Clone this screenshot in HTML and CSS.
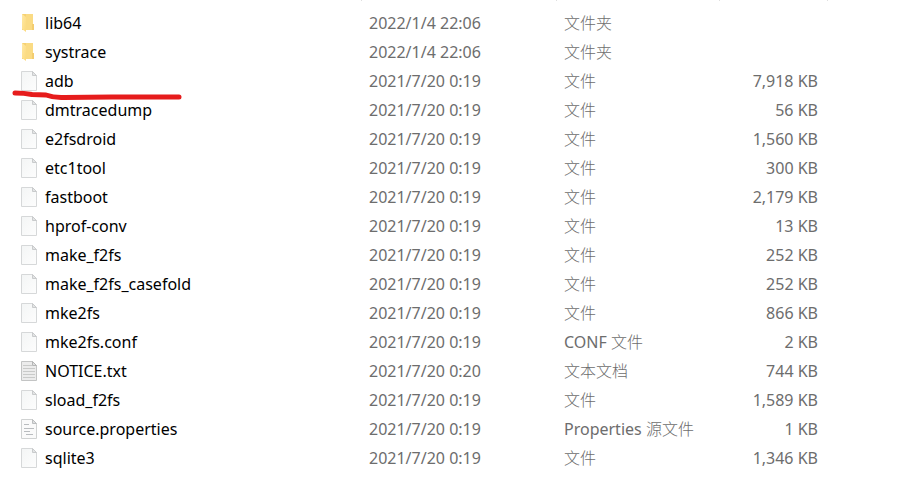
FILE: index.html
```html
<!DOCTYPE html>
<html lang="zh-CN">
    <head>
        <meta charset="utf-8">
        <title>platform-tools</title>
        <link rel="stylesheet" href="styles.css">
    </head>
    <body>
        <svg class="defs" width="0" height="0" aria-hidden="true">
            <linearGradient id="g-front" x1="0" y1="0" x2="1" y2="1">
                <stop offset="0" stop-color="#ffe9a6"/>
                <stop offset="1" stop-color="#fbd97b"/>
            </linearGradient>
            <linearGradient id="g-page" x1="0" y1="0" x2="1" y2="1">
                <stop offset="0" stop-color="#f3f5f5"/>
                <stop offset="1" stop-color="#fdfdfd"/>
            </linearGradient>
            <symbol id="i-folder" viewBox="0 0 16 20">
                <path d="M1 1h11v10h1v6H1z" fill="#f6d173"/>
                <path d="M5 1h7v10h1v6H5z" fill="#fadb84"/>
                <path d="M11 11h2v6h-2z" fill="#f3cd70"/>
                <path d="M1 1l4 3v15l-4-3z" fill="url(#g-front)"/>
            </symbol>
            <symbol id="i-file" viewBox="0 0 16 20">
                <path d="M.5.5h11l4 4v15H.5z" fill="url(#g-page)" stroke="#d6d8d9"/>
                <path d="M11.5.5v4h4z" fill="#e3e4e5" stroke="#c9cbcc"/>
            </symbol>
            <symbol id="i-text" viewBox="0 0 16 20">
                <path d="M.5.5h11l4 4v15H.5z" fill="#ececec" stroke="#c3c4c4"/>
                <path d="M2 4.500h9M2 7.500h12M2 10.500h12M2 13.500h12M2 16.500h12" stroke="#c9cac9"/>
                <path d="M11.5.5v4h4z" fill="#e0e0e0" stroke="#b5b6b6"/>
            </symbol>
            <symbol id="i-props" viewBox="0 0 16 20">
                <path d="M.5.5h11l4 4v15H.5z" fill="#fafafa" stroke="#d0d2d2"/>
                <path d="M3 5.5h5M3 9.5h10M3 12.5h6M5 15.5h7" stroke="#b9bcbf"/>
                <path d="M11.5.5v4h4z" fill="#dedfe0" stroke="#bcbebf"/>
            </symbol>
        </svg>
        <table class="files">
            <colgroup>
                <col class="c-name"><col class="c-date"><col class="c-type"><col class="c-size"><col>
            </colgroup>
            <thead>
                <tr><th></th><th></th><th></th><th></th><th></th></tr>
            </thead>
            <tbody id="rows"></tbody>
        </table>
        <script src="script.js"></script>
    </body>
</html>
```
FILE: styles.css
```css
:root {
    --c-text: #000000;
    --c-sub: #6d6d6d;
    --c-line: #e0e0e0;
    --c-mark: #e61c1c;
    --row-h: 29px;
}
html, body {
    margin: 0;
    padding: 0;
}

body {
    background-color: #ffffff;
    color: var(--c-text);
    font-family: "Noto Sans", "Noto Sans CJK SC", sans-serif;
    font-size: 16px;
    line-height: 28px;
}

.defs {
    position: absolute;
}

.files {
    width: 100%;
    table-layout: fixed;
    border-collapse: separate;
    border-spacing: 0;
}
.files .c-name {
    width: 362px;
}
.files .c-date {
    width: 195px;
}
.files .c-type {
    width: 163px;
}
.files .c-size {
    width: 108px;
}

/* bottom edge of the header, only the column dividers are left */
.files th {
    height: 1px;
    padding: 0;
    line-height: 0;
    border-right: 1px solid var(--c-line);
}
.files th:last-child {
    border-right: 0;
}

.files tbody::before {
    content: "";
    display: table-row;
    height: 7px;
}
.files td {
    height: var(--row-h);
    padding: 0 7px;
    color: var(--c-sub);
    white-space: nowrap;
}
.files .name {
    position: relative;
    padding-left: 21px;
    color: var(--c-text);
}
.files .size {
    padding-right: 10px;
    text-align: right;
}

.entry {
    display: flex;
    align-items: center;
    gap: 8px;
}
.entry .icon {
    width: 16px;
    height: 20px;
}

.cjk {
    font-family: "Noto Sans CJK SC", sans-serif;
    font-weight: 300;
}

.mark {
    position: absolute;
    left: 12px;
    top: 23px;
    z-index: 1;
    fill: none;
    stroke: var(--c-mark);
    stroke-width: 5;
    stroke-linecap: round;
    stroke-linejoin: round;
}
```
FILE: script.js
```js
(function(){
    var files = [
        ["folder", "lib64", "2022/1/4 22:06", "", "文件夹", ""],
        ["folder", "systrace", "2022/1/4 22:06", "", "文件夹", ""],
        ["file", "adb", "2021/7/20 0:19", "", "文件", "7,918 KB"],
        ["file", "dmtracedump", "2021/7/20 0:19", "", "文件", "56 KB"],
        ["file", "e2fsdroid", "2021/7/20 0:19", "", "文件", "1,560 KB"],
        ["file", "etc1tool", "2021/7/20 0:19", "", "文件", "300 KB"],
        ["file", "fastboot", "2021/7/20 0:19", "", "文件", "2,179 KB"],
        ["file", "hprof-conv", "2021/7/20 0:19", "", "文件", "13 KB"],
        ["file", "make_f2fs", "2021/7/20 0:19", "", "文件", "252 KB"],
        ["file", "make_f2fs_casefold", "2021/7/20 0:19", "", "文件", "252 KB"],
        ["file", "mke2fs", "2021/7/20 0:19", "", "文件", "866 KB"],
        ["file", "mke2fs.conf", "2021/7/20 0:19", "CONF ", "文件", "2 KB"],
        ["text", "NOTICE.txt", "2021/7/20 0:20", "", "文本文档", "744 KB"],
        ["file", "sload_f2fs", "2021/7/20 0:19", "", "文件", "1,589 KB"],
        ["props", "source.properties", "2021/7/20 0:19", "Properties ", "源文件", "1 KB"],
        ["file", "sqlite3", "2021/7/20 0:19", "", "文件", "1,346 KB"]
    ];

    var mark = '<svg class="mark" width="172" height="12" viewBox="0 0 172 12" aria-hidden="true">' +
        '<path d="M3 4Q12 4 20 5.500L34 6Q42 9 52 8.500L100 8L167 8"/></svg>';

    var html = "";
    for (var i = 0; i < files.length; i++) {
        var f = files[i];
        html += '<tr>' +
            '<td class="name"><div class="entry">' +
            '<svg class="icon" aria-hidden="true"><use href="#i-' + f[0] + '"/></svg>' +
            '<span>' + f[1] + '</span></div>' + (f[1] === "adb" ? mark : "") + '</td>' +
            '<td>' + f[2] + '</td>' +
            '<td>' + f[3] + '<span class="cjk">' + f[4] + '</span></td>' +
            '<td class="size">' + f[5] + '</td>' +
            '<td></td></tr>';
    }
    document.getElementById("rows").innerHTML = html;
})();
```
